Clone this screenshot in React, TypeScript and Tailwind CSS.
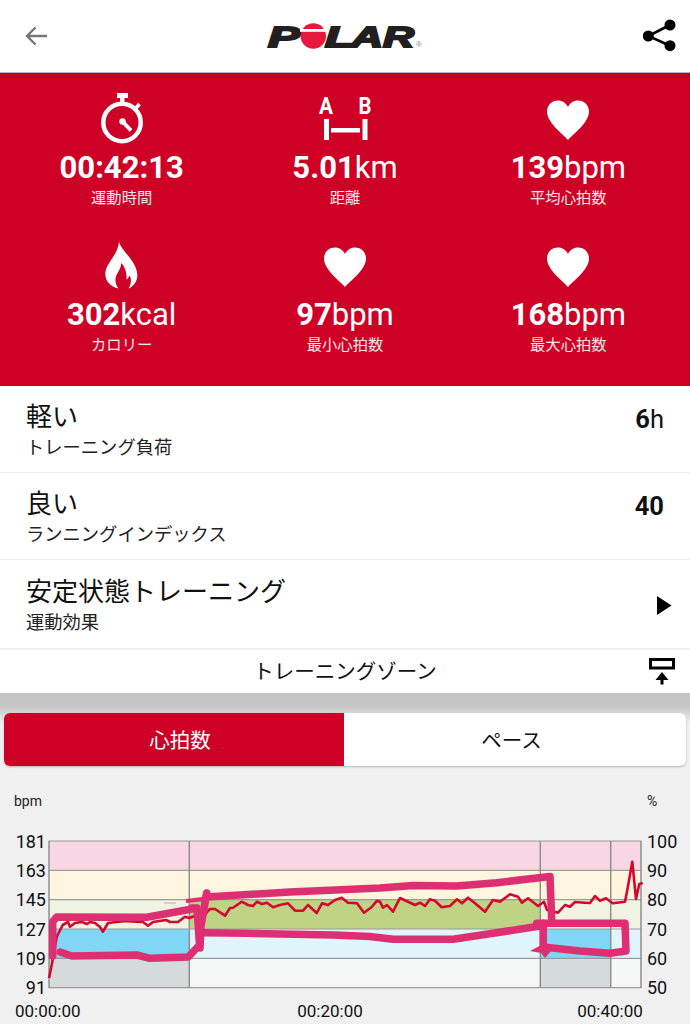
const sans = "font-['Roboto','Noto_Sans_CJK_JP',sans-serif]";

function Heart() {
  return (
    <svg width="60" height="56" viewBox="0 0 60 56" className="block">
      <path d="M30 50 C26 45 9 33 9 21.5 C9 15 14 10.5 20 10.5 C24.500 10.500 28 13 30 17 C32 13 35.500 10.500 40 10.500 C46 10.500 51 15 51 21.500 C51 33 34 45 30 50 Z" fill="#fff" />
    </svg>
  );
}

function Stopwatch() {
  return (
    <svg width="60" height="56" viewBox="92 90 60 56" className="block">
      <circle cx="122" cy="122.500" r="18.700" fill="none" stroke="#fff" strokeWidth="4.500" />
      <rect x="117" y="93" width="11" height="5" fill="#fff" />
      <rect x="120" y="97" width="4.500" height="6" fill="#fff" />
      <path d="M136 108 L139.500 104" stroke="#fff" strokeWidth="3.500" />
      <circle cx="122.500" cy="121.500" r="3.200" fill="#fff" />
      <path d="M123 122 L131 130.500" stroke="#fff" strokeWidth="4" />
    </svg>
  );
}

function Distance() {
  return (
    <svg width="60" height="56" viewBox="315 90 60 56" className="block">
      <text x="326" y="114" textAnchor="middle" fontSize="24" fontWeight="700" fill="#fff" fontFamily="Roboto, sans-serif" textLength="14" lengthAdjust="spacingAndGlyphs">A</text>
      <text x="365" y="114" textAnchor="middle" fontSize="24" fontWeight="700" fill="#fff" fontFamily="Roboto, sans-serif" textLength="13" lengthAdjust="spacingAndGlyphs">B</text>
      <rect x="324" y="119" width="5" height="21" fill="#fff" />
      <rect x="362.500" y="119" width="5" height="21" fill="#fff" />
      <rect x="331" y="128" width="29" height="4.500" fill="#fff" />
    </svg>
  );
}

function Flame() {
  return (
    <svg width="60" height="56" viewBox="0 0 60 56" className="block">
      <path d="M27 4.500 C29 14 45 24 45.300 38 C45.500 44 41.500 49.500 36.500 51.500 C39.500 47 39.500 41.500 37.500 38.500 C36.500 41 35.500 42 34.500 42.500 C35 36 33 29.500 29 26 C29.500 32 24.500 36 23.500 41.500 C23 45.500 24.500 49 26.500 51.500 C18.500 50 13.300 44 13.300 37 C13.300 26 26 19 27 4.500 Z" fill="#fff" />
    </svg>
  );
}

const stats = [
  { icon: <Stopwatch />, value: "00:42:13", unit: "", label: "運動時間" },
  { icon: <Distance />, value: "5.01", unit: "km", label: "距離" },
  { icon: <Heart />, value: "139", unit: "bpm", label: "平均心拍数" },
  { icon: <Flame />, value: "302", unit: "kcal", label: "カロリー" },
  { icon: <Heart />, value: "97", unit: "bpm", label: "最小心拍数" },
  { icon: <Heart />, value: "168", unit: "bpm", label: "最大心拍数" },
];

const trace =
  "M49 978 L51.700 965 L56.700 937 L62.700 925 L68 922 L70 926.700 L75 923 L81.700 922 L87 924 L90 922 L95 923 L100 927 L103 931.700 L108 923 L125 921 L136.700 921.700 L143 922 L148 925.700 L153 922 L166 920 L170 922 L178 922 L185 916.700 L189 918 L195 916 L203 918 L207 912 L210 909 L215 909 L225 915.700 L230 908 L233 907.700 L241.700 901.700 L248 905 L253 906 L257 901.700 L262 904 L267 902.700 L273 907.300 L280 905 L288 903.300 L295 910.700 L303 910.700 L308 905 L316.700 913 L322 903.300 L328 905 L335 900 L341.700 897.700 L348 902.700 L357 903.300 L364 912.700 L372 906.700 L377 900.700 L380 901.700 L383 907.700 L387 905 L393 911.700 L400 898 L408 901.700 L415 905 L420 902.700 L425 906 L430 899.300 L435 900.700 L441.700 907.300 L450 906 L457 899.300 L462 903.300 L468 897.700 L475 903.300 L485 911.700 L493 900 L500 901.700 L510 894.300 L518 896.700 L522 902.700 L528 898.300 L538 906 L544 901.700 L547 910 L558 912.700 L565 905 L570 906.700 L575 902 L585 902.700 L590 903 L595 896 L600 900.700 L606 898.300 L612.700 903.300 L625 901.700 L627.300 890 L632.300 861.700 L636 899 L639.300 884 L642.700 883";

function Chart() {
  const left = ["181", "163", "145", "127", "109", "91"];
  const right = ["100", "90", "80", "70", "60", "50"];
  const ys = [841, 870.300, 899.700, 929, 958.300, 987.700];
  return (
    <svg viewBox="0 766 690 258" width="690" height="258" className="block" fontFamily="Roboto, sans-serif">
      <text x="14" y="806" fontSize="14" fill="#222">bpm</text>
      <text x="647" y="806" fontSize="14" fill="#222">%</text>

      <rect x="49" y="841" width="592" height="29.300" fill="#f9d6e3" />
      <rect x="49" y="870.300" width="592" height="29.400" fill="#fef5df" />
      <rect x="49" y="899.700" width="592" height="29.300" fill="#eff3e2" />
      <rect x="49" y="929" width="592" height="29.300" fill="#e0f4fb" />
      <rect x="49" y="958.300" width="592" height="29.400" fill="#f5f7f6" />
      <rect x="49" y="929" width="140" height="29.300" fill="#80d6f5" />
      <rect x="49" y="958.300" width="140" height="29.400" fill="#d5dada" />
      <rect x="189" y="899.700" width="351" height="29.300" fill="#bed383" />
      <rect x="540" y="929" width="70.700" height="29.300" fill="#80d6f5" />
      <rect x="540" y="958.300" width="70.700" height="29.400" fill="#d5dada" />

      {ys.map((y) => (
        <line key={y} x1="48.500" x2="641.500" y1={y} y2={y} stroke="#9a9a9a" strokeWidth="1.200" />
      ))}
      {[49, 189.300, 540.300, 610.700, 641].map((x) => (
        <line key={x} x1={x} x2={x} y1="841" y2="987.700" stroke="#8f8f8f" strokeWidth="1.500" />
      ))}

      <path d={trace} fill="none" stroke="#d5062f" strokeWidth="2.600" strokeLinejoin="round" />

      <g fill="none" stroke="#df2f73" strokeLinecap="round" strokeLinejoin="round" strokeWidth="7.500">
        <path d="M52.700 956 L52.700 921.700 L56.700 917 L146.700 917.300 L192 909" />
        <path d="M192 908 L197 908 L199.500 945 L188.300 957 L150 958.300 L136.700 955 L71.700 956 L60 952" />
        <path d="M206 897 L290 892 L380 888 L413 885.500 L456.700 886 L496.700 882.700 L550 876.500 L551.700 920" />
        <path d="M206.700 893 L201 926 L200 948" />
        <path d="M203.300 932.700 L246.700 933.300 L333 935 L370 936.500 L393 939.300 L453 939.300 L503 931.700 L540 926" />
        <path d="M536.700 923.300 L625 923.300 L626 951 L610 953.300 L580 951 L543.300 947 L543.300 923" />
      </g>
      <path d="M186 899 L206 896.500 L206 901 L186 903 Z" fill="#df2f73" />
      <path d="M164 902.500 L176 902.500 L176 903.500 L164 903.500 Z" fill="#f08cb0" />
      <path d="M530 951 L545 943 L552 950 L545 958 L541 953 Z" fill="#df2f73" />

      {left.map((t, i) => (
        <text key={t} x="46" y={ys[i] + 6.500} textAnchor="end" fontSize="18" fill="#111">{t}</text>
      ))}
      {right.map((t, i) => (
        <text key={t} x="647" y={ys[i] + 6.500} fontSize="18" fill="#111">{t}</text>
      ))}
      <text x="15" y="1017" fontSize="17" fill="#111">00:00:00</text>
      <text x="330" y="1017" fontSize="17" textAnchor="middle" fill="#111">00:20:00</text>
      <text x="610" y="1017" fontSize="17" textAnchor="middle" fill="#111">00:40:00</text>
    </svg>
  );
}

function Row({ title, sub, right, divider }: { title: string; sub: string; right: React.ReactNode; divider: string }) {
  return (
    <div className={`flex items-center justify-between pl-[26px] pr-[26px] pt-[2px] ${divider}`}>
      <div className="flex flex-col">
        <div className="text-[26px] leading-[34px] text-[#111]">{title}</div>
        <div className="text-[18.300px] leading-[24px] mt-[2px] text-[#222]">{sub}</div>
      </div>
      {right}
    </div>
  );
}

export default function App() {
  return (
    <div className={`w-[690px] h-[1024px] overflow-hidden bg-[#f0f0f0] ${sans}`}>
      <header className="h-[73px] bg-white border-b border-[#b5b5b5] flex items-center justify-between pl-[24px] pr-[13px]">
        <svg width="24" height="20" viewBox="0 0 24 20">
          <path d="M23 10 H3 M11.500 1.500 L3 10 L11.500 18.500" fill="none" stroke="#777" strokeWidth="2.400" />
        </svg>
        <svg width="160" height="44" viewBox="266 14 160 44">
          <g fontFamily="'Liberation Sans', sans-serif" fontWeight="700" fontStyle="italic" fontSize="30" fill="#231f20" stroke="#231f20" strokeWidth="2">
            <text x="268" y="47" textLength="32" lengthAdjust="spacingAndGlyphs">P</text>
            <text x="325" y="47" textLength="29" lengthAdjust="spacingAndGlyphs">L</text>
            <text x="351" y="47" textLength="32" lengthAdjust="spacingAndGlyphs">A</text>
            <text x="383" y="47" textLength="31" lengthAdjust="spacingAndGlyphs">R</text>
          </g>
          <circle cx="313.300" cy="36" r="12.700" fill="#e8173c" />
          <rect x="300" y="29" width="27" height="2.800" fill="#fff" />
          <text x="416" y="47" fontSize="8" fill="#888" fontFamily="'Liberation Sans', sans-serif">®</text>
        </svg>
        <svg width="34" height="34" viewBox="642 19 34 34">
          <path d="M669 25 L647.300 36 L669 45.700" fill="none" stroke="#000" strokeWidth="2.600" />
          <circle cx="647.300" cy="36" r="5.500" fill="#000" />
          <circle cx="669" cy="25" r="5.500" fill="#000" />
          <circle cx="669" cy="45.700" r="5.500" fill="#000" />
        </svg>
      </header>

      <section className="h-[313px] bg-[linear-gradient(#b9001f_0,#cf0026_6px)] px-[10px] grid grid-cols-3 auto-rows-[146.500px] text-white">
        {stats.map((s) => (
          <div key={s.label} className="flex flex-col items-center pt-[17px]">
            {s.icon}
            <div className="h-[34px] mt-[5px] text-[31px] leading-[34px] font-normal">
              <span className="font-bold">{s.value}</span>
              {s.unit}
            </div>
            <div className="text-[15.300px] leading-[20px] mt-[3px] text-white/90">{s.label}</div>
          </div>
        ))}
      </section>

      <section className="bg-white grid grid-rows-[87px_87px_90px]">
        <Row
          title="軽い"
          sub="トレーニング負荷"
          divider="border-b border-[#eeeeee]"
          right={
            <div className="self-start mt-[15px] text-[25.500px] leading-[32px] text-[#111]">
              <span className="font-bold">6</span>h
            </div>
          }
        />
        <Row
          title="良い"
          sub="ランニングインデックス"
          divider="border-b border-[#eeeeee]"
          right={<div className="self-start mt-[15px] text-[25.500px] leading-[32px] font-bold text-[#111]">40</div>}
        />
        <Row
          title="安定状態トレーニング"
          sub="運動効果"
          divider="border-b-2 border-[#f0f0f0] !pr-[18px]"
          right={
            <svg width="15" height="19" viewBox="0 0 15 19">
              <path d="M0 0 L14.500 9.500 L0 19 Z" fill="#000" />
            </svg>
          }
        />
      </section>

      <div className="h-[43px] bg-white flex items-center justify-center relative pt-[2px]">
        <span className="text-[20.500px] text-[#111]">トレーニングゾーン</span>
        <svg width="28" height="28" viewBox="648 657 28 28" className="absolute right-[14px] top-[7px]">
          <rect x="650.500" y="659.500" width="23" height="8.500" fill="none" stroke="#000" strokeWidth="3" />
          <path d="M655.500 680 L662 672 L668.500 680 Z" fill="#000" />
          <rect x="660.500" y="678" width="3" height="6.500" fill="#000" />
        </svg>
      </div>

      <div className="pt-[20px] bg-[linear-gradient(#c3c3c3_0,#c7c7c7_14px,#f0f0f0_30px)]">
        <div className="mx-[4px] h-[53px] rounded-[6px] overflow-hidden grid grid-cols-[340px_1fr] bg-white shadow-[0_1px_2px_rgba(0,0,0,0.25)]">
          <div className="bg-[#cf0026] text-white flex items-center justify-center text-[20.500px] pl-[12px] pt-[3px]">心拍数</div>
          <div className="text-[#111] flex items-center justify-center text-[20.500px] pr-[7px] pt-[3px]">ペース</div>
        </div>
      </div>

      <Chart />
    </div>
  );
}
